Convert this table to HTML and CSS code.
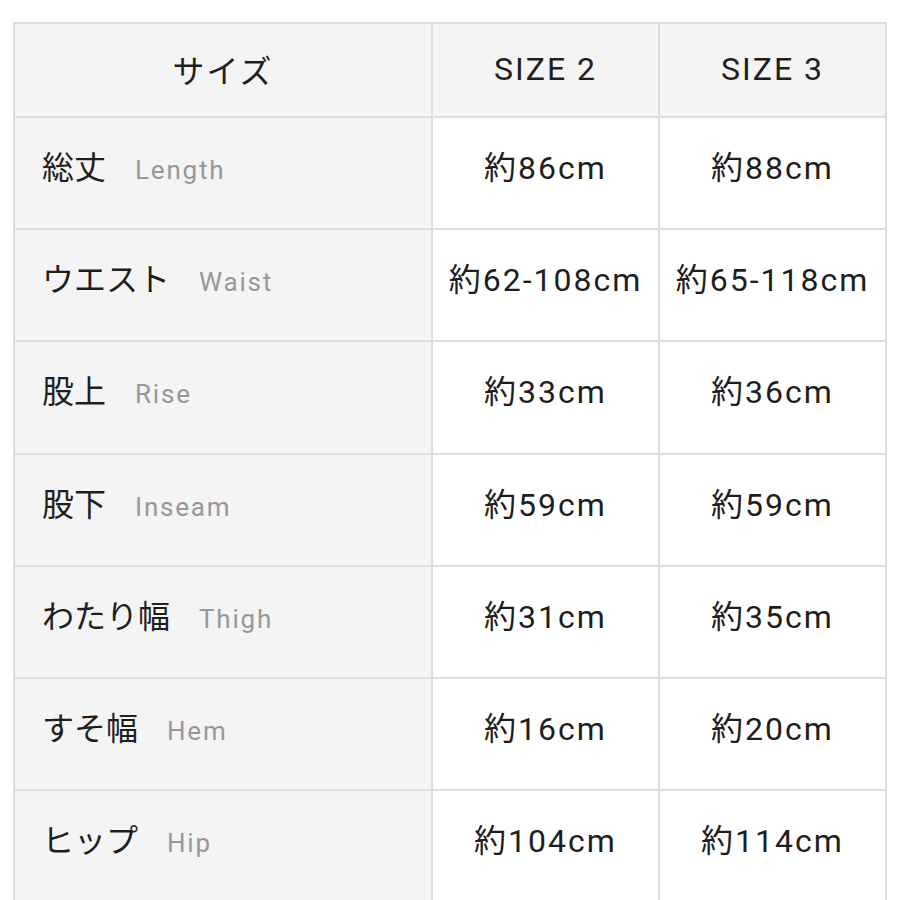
FILE: index.html
```html
<!DOCTYPE html>
<html lang="ja">
<head>
<meta charset="utf-8">
<link rel="stylesheet" href="styles.css">
</head>
<body>
<div class="page">
  <div class="table">
    <div class="cell head">サイズ</div>
    <div class="cell head">SIZE 2</div>
    <div class="cell head">SIZE 3</div>

    <div class="cell label"><div class="lbl"><span class="ja">総丈</span><span class="en">Length</span></div></div>
    <div class="cell val">約86cm</div>
    <div class="cell val">約88cm</div>

    <div class="cell label"><div class="lbl"><span class="ja">ウエスト</span><span class="en">Waist</span></div></div>
    <div class="cell val">約62-108cm</div>
    <div class="cell val">約65-118cm</div>

    <div class="cell label"><div class="lbl"><span class="ja">股上</span><span class="en">Rise</span></div></div>
    <div class="cell val">約33cm</div>
    <div class="cell val">約36cm</div>

    <div class="cell label"><div class="lbl"><span class="ja">股下</span><span class="en">Inseam</span></div></div>
    <div class="cell val">約59cm</div>
    <div class="cell val">約59cm</div>

    <div class="cell label"><div class="lbl"><span class="ja">わたり幅</span><span class="en">Thigh</span></div></div>
    <div class="cell val">約31cm</div>
    <div class="cell val">約35cm</div>

    <div class="cell label"><div class="lbl"><span class="ja">すそ幅</span><span class="en">Hem</span></div></div>
    <div class="cell val">約16cm</div>
    <div class="cell val">約20cm</div>

    <div class="cell label"><div class="lbl"><span class="ja">ヒップ</span><span class="en">Hip</span></div></div>
    <div class="cell val">約104cm</div>
    <div class="cell val">約114cm</div>
  </div>
</div>
</body>
</html>
```
FILE: styles.css
```css
html, body {
  margin: 0;
  padding: 0;
  background: #ffffff;
}
body {
  font-family: Roboto, "Noto Sans CJK JP", sans-serif;
  color: #1e1e1e;
  overflow: hidden;
}
.page {
  padding: 22px 0 0 13px;
}
.table {
  display: grid;
  grid-template-columns: 416px 225px 225px;
  grid-template-rows: 92px;
  grid-auto-rows: 110.2px;
  gap: 2px;
  padding: 2px;
  width: 870px;
  background: #dddddd;
}
.cell {
  display: flex;
  align-items: center;
  justify-content: center;
  background: #ffffff;
  font-size: 32px;
  letter-spacing: 2px;
  padding-bottom: 16px;
  box-sizing: border-box;
  white-space: nowrap;
}
.head {
  background: #f4f4f4;
  padding-bottom: 2px;
}
.label {
  background: #f4f4f4;
  justify-content: flex-start;
  padding-left: 27px;
}
.ja {
  letter-spacing: 0;
}
.en {
  margin-left: 29px;
  font-size: 26px;
  letter-spacing: 1.8px;
  color: #979797;
}
```
